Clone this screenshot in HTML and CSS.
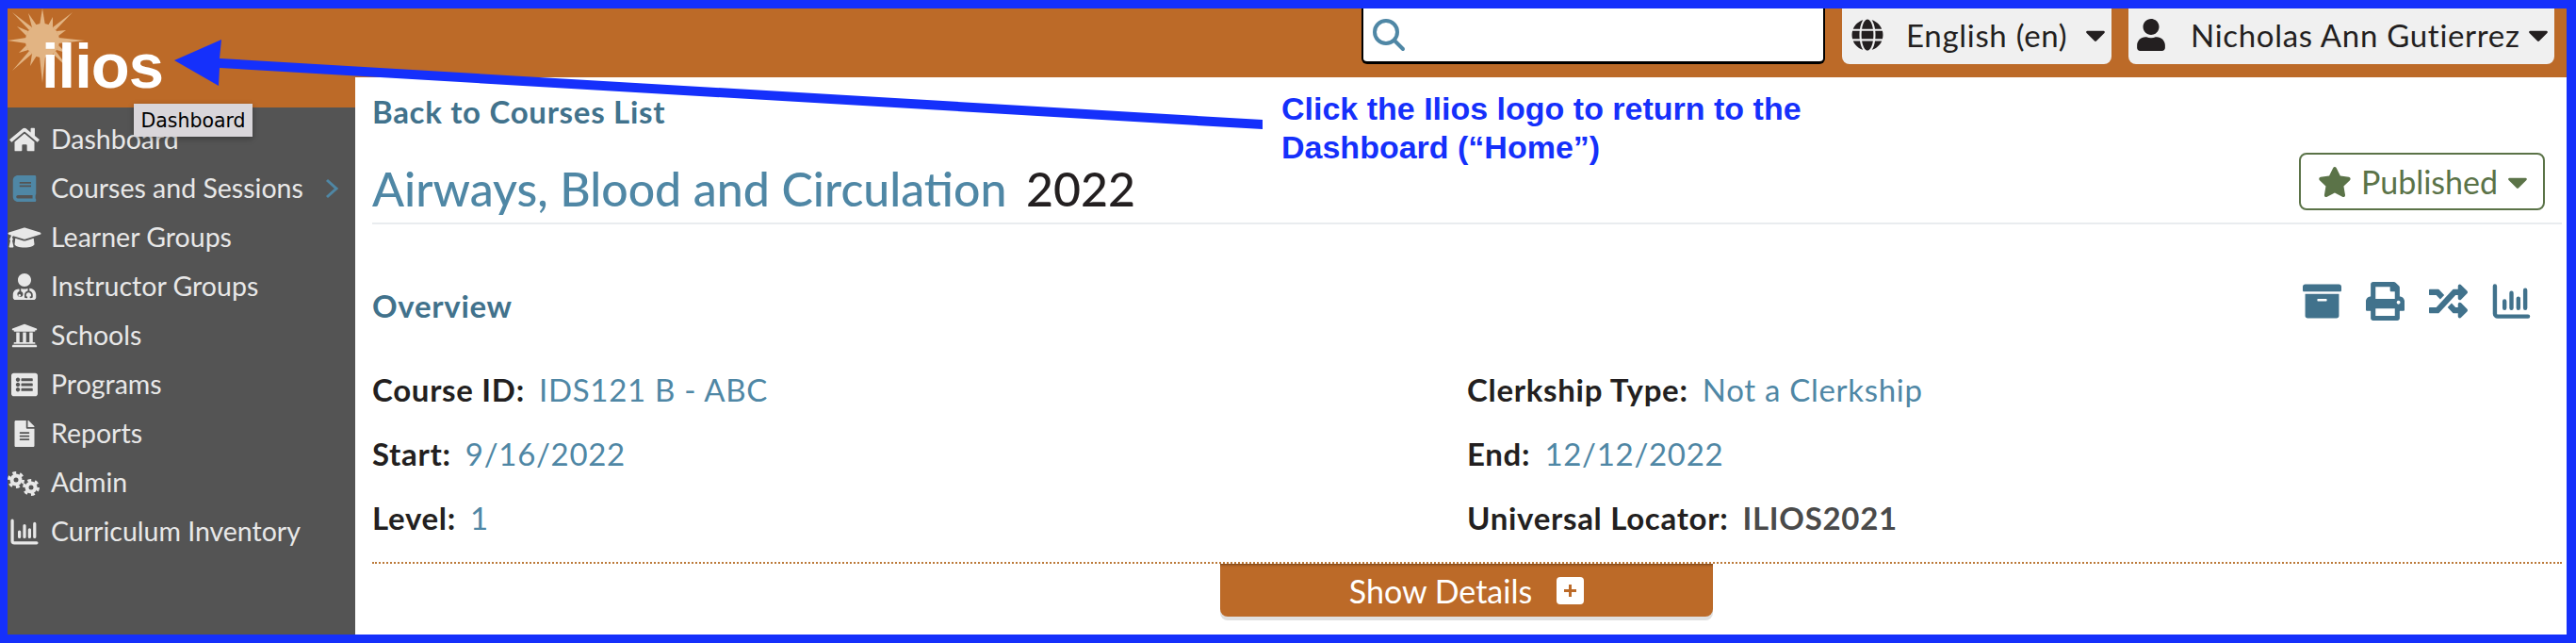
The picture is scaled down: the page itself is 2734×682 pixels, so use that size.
FILE: index.html
```html
<!DOCTYPE html>
<html lang="en">

<head>
  <meta charset="UTF-8">
  <title>Ilios</title>
  <link rel="stylesheet" href="styles.css">
</head>

<body>
  <div class="frame">
    <div class="side">
      <a class="logo" href="#">
        <svg class="logo-star" viewBox="0 0 90 90">
          <circle cx="45" cy="43" r="18" />
          <polygon points="45,9 48,27 42,27" />
          <polygon points="45,88 48,60 42,60" />
          <polygon points="8,43 28,40 28,46" />
          <polygon points="90,43 62,40 62,46" />
          <polygon points="13,13 34,29 31,32" />
          <polygon points="77,13 59,32 56,29" />
          <polygon points="13,75 31,54 34,57" />
          <polygon points="75,75 56,57 59,54" />
          <polygon points="30,14 39,27 34,29" />
          <polygon points="56,18 56,29 51,27" />
          <polygon points="18,28 30,33 28,38" />
          <polygon points="70,32 62,38 60,33" />
          <polygon points="20,56 28,48 30,53" />
          <polygon points="70,56 60,53 62,48" />
          <polygon points="32,70 34,57 39,59" />
          <polygon points="58,70 51,59 56,57" />
        </svg>
        <span class="logo-text">ilios</span>
      </a>
      <span class="tip">Dashboard</span>
      <ul class="nav">
        <li><svg class="nav-icon" viewBox="0 0 576 512"><path d="M280.37 148.26L96 300.11V464a16 16 0 0 0 16 16l112.06-.29a16 16 0 0 0 15.92-16V368a16 16 0 0 1 16-16h64a16 16 0 0 1 16 16v95.64a16 16 0 0 0 16 16.05L464 480a16 16 0 0 0 16-16V300L295.67 148.26a12.19 12.19 0 0 0-15.3 0zM571.6 251.47L488 182.56V44.05a12 12 0 0 0-12-12h-56a12 12 0 0 0-12 12v72.61L318.47 43a48 48 0 0 0-61 0L4.34 251.47a12 12 0 0 0-1.6 16.9l25.5 31A12 12 0 0 0 45.15 301l235.22-193.74a12.19 12.19 0 0 1 15.3 0L530.9 301a12 12 0 0 0 16.9-1.6l25.5-31a12 12 0 0 0-1.7-16.93z"/></svg>Dashboard</li>
        <li class="active"><svg class="nav-icon" viewBox="0 0 448 512"><path d="M448 360V24c0-13.3-10.7-24-24-24H96C43 0 0 43 0 96v320c0 53 43 96 96 96h328c13.3 0 24-10.7 24-24v-16c0-7.5-3.5-14.3-8.9-18.7-4.2-15.4-4.2-59.3 0-74.7 5.4-4.3 8.9-11.1 8.9-18.6zM128 134c0-3.3 2.7-6 6-6h212c3.3 0 6 2.7 6 6v20c0 3.3-2.7 6-6 6H134c-3.3 0-6-2.7-6-6v-20zm0 64c0-3.3 2.7-6 6-6h212c3.3 0 6 2.7 6 6v20c0 3.3-2.7 6-6 6H134c-3.3 0-6-2.7-6-6v-20zm253.4 250H96c-17.7 0-32-14.3-32-32 0-17.6 14.4-32 32-32h285.4c-1.9 17.1-1.9 46.9 0 64z"/></svg>Courses and Sessions<svg class="nav-arrow" viewBox="0 0 16 24"><polyline points="3,3 13,12 3,21" /></svg></li>
        <li><svg class="nav-icon" viewBox="0 0 640 512"><path d="M622.34 153.2L343.4 67.5c-15.2-4.67-31.6-4.67-46.79 0L17.66 153.2c-23.54 7.23-23.54 38.36 0 45.59l48.63 14.94c-10.67 13.19-17.23 29.28-17.88 46.9C38.78 266.15 32 276.11 32 288c0 10.78 5.68 19.85 13.86 25.65L20.33 428.53C18.11 438.52 25.71 448 35.94 448h56.11c10.24 0 17.84-9.48 15.62-19.47L82.14 313.65C90.32 307.85 96 298.78 96 288c0-11.57-6.47-21.25-15.66-26.87.76-15.02 8.44-28.3 20.69-36.72L296.6 284.5c9.06 2.78 26.44 6.25 46.79 0l278.95-85.7c23.55-7.24 23.55-38.36 0-45.6zM352.79 315.09c-28.53 8.76-52.84 3.92-65.59 0l-145.02-44.55L128 384c0 35.35 85.96 64 192 64s192-28.65 192-64l-14.18-113.47-145.03 44.56z"/></svg>Learner Groups</li>
        <li><svg class="nav-icon" viewBox="0 0 448 512"><path d="M224 256c70.7 0 128-57.3 128-128S294.7 0 224 0 96 57.3 96 128s57.3 128 128 128zM104 424c0 13.3 10.7 24 24 24s24-10.7 24-24-10.7-24-24-24-24 10.7-24 24zm216-135.4v49c36.5 7.4 64 39.8 64 78.4v41.7c0 7.6-5.4 14.2-12.9 15.7l-32.2 6.4c-4.3.9-8.5-1.9-9.4-6.3l-3.1-15.7c-.9-4.3 1.9-8.6 6.3-9.4l19.3-3.9V416c0-62.8-96-65.1-96 1.9v26.7l19.3 3.9c4.3.9 7.1 5.1 6.3 9.4l-3.1 15.7c-.9 4.3-5.1 7.1-9.4 6.3l-31.2-4.2c-7.9-1.1-13.8-7.8-13.8-15.9V416c0-38.6 27.5-70.9 64-78.4v-45.2c-2.2-.7-4.4-1.1-6.6-1.9-18 8.3-38.1 13-59.4 13s-41.4-4.7-59.4-13c-2.2.8-4.4 1.2-6.6 1.9v54.2c23.1 6.9 40 28.1 40 53.4 0 30.9-25.1 56-56 56s-56-25.1-56-56c0-25.3 16.9-46.5 40-53.4v-42.8C47.5 298.4 0 351.3 0 416v48c0 26.5 21.5 48 48 48h352c26.5 0 48-21.5 48-48v-48c0-71.3-57.9-124.6-128-127.4z"/></svg>Instructor Groups</li>
        <li><svg class="nav-icon" viewBox="0 0 512 512"><path d="M496 128v16a8 8 0 0 1-8 8h-24v12c0 6.627-5.373 12-12 12H60c-6.627 0-12-5.373-12-12v-12H24a8 8 0 0 1-8-8v-16a8 8 0 0 1 4.941-7.392l232-88a7.996 7.996 0 0 1 6.118 0l232 88A8 8 0 0 1 496 128zm-24 304H40c-13.255 0-24 10.745-24 24v16a8 8 0 0 0 8 8h464a8 8 0 0 0 8-8v-16c0-13.255-10.745-24-24-24zM96 192v192H60c-6.627 0-12 5.373-12 12v20h416v-20c0-6.627-5.373-12-12-12h-36V192h-64v192h-64V192h-64v192h-64V192H96z"/></svg>Schools</li>
        <li><svg class="nav-icon" viewBox="0 0 512 512"><path d="M464 480H48c-26.51 0-48-21.49-48-48V80c0-26.51 21.49-48 48-48h416c26.51 0 48 21.49 48 48v352c0 26.51-21.49 48-48 48zM128 120c-22.091 0-40 17.909-40 40s17.909 40 40 40 40-17.909 40-40-17.909-40-40-40zm0 96c-22.091 0-40 17.909-40 40s17.909 40 40 40 40-17.909 40-40-17.909-40-40-40zm0 96c-22.091 0-40 17.909-40 40s17.909 40 40 40 40-17.909 40-40-17.909-40-40-40zm288-136v-32c0-6.627-5.373-12-12-12H204c-6.627 0-12 5.373-12 12v32c0 6.627 5.373 12 12 12h200c6.627 0 12-5.373 12-12zm0 96v-32c0-6.627-5.373-12-12-12H204c-6.627 0-12 5.373-12 12v32c0 6.627 5.373 12 12 12h200c6.627 0 12-5.373 12-12zm0 96v-32c0-6.627-5.373-12-12-12H204c-6.627 0-12 5.373-12 12v32c0 6.627 5.373 12 12 12h200c6.627 0 12-5.373 12-12z"/></svg>Programs</li>
        <li><svg class="nav-icon" viewBox="0 0 384 512"><path d="M224 136V0H24C10.7 0 0 10.7 0 24v464c0 13.3 10.7 24 24 24h336c13.3 0 24-10.7 24-24V160H248c-13.2 0-24-10.8-24-24zm64 236c0 6.6-5.4 12-12 12H108c-6.6 0-12-5.4-12-12v-8c0-6.6 5.4-12 12-12h168c6.6 0 12 5.4 12 12v8zm0-64c0 6.6-5.4 12-12 12H108c-6.6 0-12-5.4-12-12v-8c0-6.6 5.4-12 12-12h168c6.6 0 12 5.4 12 12v8zm0-72v8c0 6.6-5.4 12-12 12H108c-6.6 0-12-5.4-12-12v-8c0-6.6 5.4-12 12-12h168c6.6 0 12 5.4 12 12zm96-114.1v6.1H256V0h6.1c6.4 0 12.5 2.5 17 7l97.9 98c4.5 4.5 7 10.6 7 16.9z"/></svg>Reports</li>
        <li><svg class="nav-icon" viewBox="0 0 36 28"><circle class="gear" cx="9" cy="11" r="4.500" /><circle class="gear-teeth" cx="9" cy="11" r="7.500" /><circle class="gear" cx="25" cy="19" r="4.500" /><circle class="gear-teeth" cx="25" cy="19" r="7.500" /></svg>Admin</li>
        <li><svg class="nav-icon" viewBox="0 0 28 26"><path class="chart" d="M2 2v20a2 2 0 0 0 2 2h22M9 13v5M14 7v11M19 11v7M24 5v13" /></svg>Curriculum Inventory</li>
      </ul>
    </div>

    <div class="main">
      <div class="topbar">
        <div class="search">
          <svg class="search-icon" viewBox="0 0 36 36"><circle cx="15" cy="15" r="12" /><path d="M24 24l9 9" /></svg>
        </div>
        <div class="menu lang">
          <svg class="menu-icon" viewBox="0 0 496 512"><path d="M336.5 160C322 70.7 287.8 8 248 8s-74 62.7-88.5 152h177zM152 256c0 22.2 1.2 43.5 3.3 64h185.3c2.1-20.5 3.3-41.8 3.3-64s-1.2-43.5-3.3-64H155.3c-2.1 20.5-3.3 41.8-3.3 64zm324.7-96c-28.6-67.9-86.5-120.4-158-141.6 24.4 33.8 41.2 84.7 50 141.6h108zM177.2 18.4C105.8 39.6 47.8 92.1 19.3 160h108c8.7-56.9 25.5-107.8 49.9-141.6zM487.4 192H372.7c2.1 21 3.3 42.5 3.3 64s-1.2 43-3.3 64h114.6c5.5-20.5 8.6-41.8 8.6-64s-3.1-43.5-8.5-64zM120 256c0-21.5 1.2-43 3.3-64H8.6C3.2 212.5 0 233.8 0 256s3.2 43.5 8.6 64h114.6c-2-21-3.2-42.5-3.2-64zm39.5 96c14.5 89.3 48.7 152 88.5 152s74-62.7 88.5-152h-177zm159.3 141.6c71.4-21.2 129.4-73.7 158-141.6h-108c-8.8 56.9-25.6 107.8-50 141.6zM19.3 352c28.6 67.9 86.5 120.4 158 141.6-24.4-33.8-41.2-84.7-50-141.6h-108z"/></svg>
          <span>English (en)</span>
          <svg class="caret" viewBox="0 0 320 512"><path d="M31.3 192h257.3c17.8 0 26.7 21.5 14.1 34.1L174.1 354.8c-7.8 7.8-20.5 7.8-28.3 0L17.2 226.1C4.6 213.5 13.5 192 31.3 192z"/></svg>
        </div>
        <div class="menu user">
          <svg class="menu-icon" viewBox="0 0 448 512"><path d="M224 256c70.7 0 128-57.3 128-128S294.7 0 224 0 96 57.3 96 128s57.3 128 128 128zm89.6 32h-16.7c-22.2 10.2-46.9 16-72.9 16s-50.6-5.8-72.9-16h-16.7C60.2 288 0 348.2 0 422.4V464c0 26.5 21.5 48 48 48h352c26.5 0 48-21.5 48-48v-41.6c0-74.2-60.2-134.4-134.4-134.4z"/></svg>
          <span>Nicholas Ann Gutierrez</span>
          <svg class="caret" viewBox="0 0 320 512"><path d="M31.3 192h257.3c17.8 0 26.7 21.5 14.1 34.1L174.1 354.8c-7.8 7.8-20.5 7.8-28.3 0L17.2 226.1C4.6 213.5 13.5 192 31.3 192z"/></svg>
        </div>
      </div>

      <div class="content">
        <a class="back" href="#">Back to Courses List</a>
        <div class="title-row">
          <h1 class="title"><span class="title-name">Airways, Blood and Circulation</span> <span class="title-year">2022</span></h1>
          <div class="published">
            <svg class="star" viewBox="0 0 576 512"><path d="M259.3 17.8L194 150.2 47.9 171.5c-26.2 3.8-36.7 36.1-17.7 54.6l105.7 103-25 145.5c-4.5 26.3 23.2 46 46.4 33.7L288 439.6l130.7 68.7c23.2 12.2 50.9-7.4 46.4-33.7l-25-145.5 105.7-103c19-18.5 8.5-50.8-17.7-54.6L382 150.2 316.7 17.8c-11.7-23.6-45.6-23.9-57.4 0z"/></svg>
            <span>Published</span>
            <svg class="caret" viewBox="0 0 320 512"><path d="M31.3 192h257.3c17.8 0 26.7 21.5 14.1 34.1L174.1 354.8c-7.8 7.8-20.5 7.8-28.3 0L17.2 226.1C4.6 213.5 13.5 192 31.3 192z"/></svg>
          </div>
        </div>

        <div class="overview-row">
          <h2 class="overview">Overview</h2>
          <div class="tools">
            <svg class="tool" viewBox="0 0 512 512"><path d="M32 448c0 17.7 14.3 32 32 32h384c17.7 0 32-14.3 32-32V160H32v288zm160-212c0-6.6 5.4-12 12-12h104c6.6 0 12 5.4 12 12v8c0 6.6-5.4 12-12 12H204c-6.6 0-12-5.4-12-12v-8zM480 32H32C14.3 32 0 46.3 0 64v48c0 8.8 7.2 16 16 16h480c8.8 0 16-7.2 16-16V64c0-17.7-14.3-32-32-32z"/></svg>
            <svg class="tool" viewBox="0 0 512 512"><path d="M448 192V77.25c0-8.49-3.37-16.62-9.37-22.63L393.37 9.37c-6-6-14.14-9.37-22.63-9.37H96C78.33 0 64 14.33 64 32v160c-35.35 0-64 28.65-64 64v112c0 8.84 7.16 16 16 16h48v96c0 17.67 14.33 32 32 32h320c17.67 0 32-14.33 32-32v-96h48c8.84 0 16-7.16 16-16V256c0-35.35-28.65-64-64-64zm-64 256H128v-96h256v96zm0-224H128V64h192v48c0 8.84 7.16 16 16 16h48v96zm48 72c-13.25 0-24-10.75-24-24 0-13.26 10.75-24 24-24s24 10.74 24 24c0 13.25-10.75 24-24 24z"/></svg>
            <svg class="tool" viewBox="0 0 512 512"><path d="M504.971 359.029c9.373 9.373 9.373 24.569 0 33.941l-80 79.984c-15.01 15.01-40.971 4.49-40.971-16.971V416h-58.785a12.004 12.004 0 0 1-8.773-3.812l-70.556-75.596 53.333-57.143L352 336h32v-39.981c0-21.438 25.943-31.998 40.971-16.971l80 79.981zM12 176h84l52.781 56.551 53.333-57.143-70.556-75.596A11.999 11.999 0 0 0 122.785 96H12c-6.627 0-12 5.373-12 12v56c0 6.627 5.373 12 12 12zm372 0v39.984c0 21.46 25.961 31.98 40.971 16.971l80-79.984c9.373-9.373 9.373-24.569 0-33.941l-80-79.981C409.943 24.021 384 34.582 384 56.019V96h-58.785a12.004 12.004 0 0 0-8.773 3.812L96 336H12c-6.627 0-12 5.373-12 12v56c0 6.627 5.373 12 12 12h110.785c3.326 0 6.503-1.381 8.773-3.812L352 176h32z"/></svg>
            <svg class="tool" viewBox="0 0 28 26"><path class="chart" d="M2 2v20a2 2 0 0 0 2 2h22M9 13v5M14 7v11M19 11v7M24 5v13" /></svg>
          </div>
        </div>

        <div class="fields">
          <div class="field"><b>Course ID:</b> <a href="#">IDS121 B - ABC</a></div>
          <div class="field"><b>Clerkship Type:</b> <a href="#">Not a Clerkship</a></div>
          <div class="field"><b>Start:</b> <a href="#">9/16/2022</a></div>
          <div class="field"><b>End:</b> <a href="#">12/12/2022</a></div>
          <div class="field"><b>Level:</b> <a href="#">1</a></div>
          <div class="field"><b>Universal Locator:</b> <span class="plain">ILIOS2021</span></div>
        </div>

        <div class="details">
          <div class="details-btn">
            Show Details
            <svg class="plus" viewBox="0 0 29 29"><rect width="29" height="29" rx="4" /><path d="M14.500 8v13M8 14.500h13" /></svg>
          </div>
        </div>
      </div>
    </div>
  </div>

  <!-- annotation on top of the screenshot -->
  <svg class="arrow" viewBox="0 0 2734 682">
    <polygon points="185,64 235,42 233,62 1340,127 1340,137 233,72 232,91" />
  </svg>
  <div class="callout">Click the Ilios logo to return to the<br>Dashboard (“Home”)</div>
</body>

</html>
```

FILE: styles.css
```css
* {
  margin: 0;
  padding: 0;
  box-sizing: border-box;
}

html,
body {
  width: 2734px;
  height: 682px;
  overflow: hidden;
  background: #fff;
}

body {
  position: relative;
  font-family: "Lato", "Open Sans", sans-serif;
  color: #231f20;
}

a {
  color: #4f87a5;
  text-decoration: none;
}

.frame {
  display: flex;
  width: 100%;
  height: 100%;
  border: solid #1530fb;
  border-width: 9px 10px 9px 8px;
}

/* left column */
.side {
  position: relative;
  display: flex;
  flex-direction: column;
  flex: 0 0 369px;
  background: #545454;
}

.logo {
  position: relative;
  display: block;
  height: 105px;
  background: #bc6a28;
}

.logo-star {
  position: absolute;
  left: -8px;
  top: -9px;
  width: 90px;
  height: 90px;
  fill: #e2b483;
}

.logo-text {
  position: absolute;
  left: 36px;
  top: 23px;
  font: bold 67px/76px "Liberation Sans", sans-serif;
  letter-spacing: -1px;
  color: #fff;
}

.tip {
  position: absolute;
  left: 134px;
  top: 101px;
  z-index: 2;
  width: 126px;
  height: 35px;
  background: #d9d6da;
  box-shadow: 0 2px 6px rgba(0, 0, 0, .3);
  font: 20.500px/37px "DejaVu Sans", sans-serif;
  text-align: center;
  color: #000;
}

.nav {
  list-style: none;
  padding-top: 7px;
}

.nav li {
  display: flex;
  align-items: center;
  height: 52px;
  font-size: 28.500px;
  color: #e8e8e8;
}

.nav-icon {
  flex: 0 0 auto;
  width: 36px;
  height: 28px;
  margin: 2px 10px 0 0;
  fill: #e8e8e8;
}

.nav .active .nav-icon {
  fill: #4f87a5;
}

.nav-arrow {
  width: 16px;
  height: 24px;
  margin: 2px 0 0 22px;
  fill: none;
  stroke: #4f87a5;
  stroke-width: 3;
}

.gear {
  fill: none;
  stroke: #e8e8e8;
  stroke-width: 4;
}

.gear-teeth {
  fill: none;
  stroke: #e8e8e8;
  stroke-width: 3;
  stroke-dasharray: 3.900 3.950;
}

.chart {
  fill: none;
  stroke: currentColor;
  stroke-width: 3;
  stroke-linecap: round;
}

/* right column */
.main {
  flex: 1;
  display: flex;
  flex-direction: column;
  min-width: 0;
}

.topbar {
  display: flex;
  justify-content: flex-end;
  gap: 18px;
  flex: 0 0 73px;
  padding: 0 13px 14px 0;
  background: #bc6a28;
}

.search {
  display: flex;
  align-items: center;
  width: 492px;
  padding-left: 9px;
  background: #fff;
  border: 2px solid #000;
  border-top: 0;
  border-bottom-width: 3px;
  border-radius: 0 0 6px 6px;
}

.search-icon {
  width: 36px;
  height: 36px;
  fill: none;
  stroke: #4f87a5;
  stroke-width: 4;
  stroke-linecap: round;
}

.menu {
  display: flex;
  align-items: center;
  padding: 0 6px 4px 10px;
  background: #f0f0f0;
  border-radius: 0 0 8px 8px;
  font-size: 33px;
  letter-spacing: .7px;
}

.lang {
  width: 286px;
}

.user {
  width: 452px;
  padding-left: 7px;
}

.menu-icon {
  width: 34px;
  height: 34px;
  margin-right: 24px;
  fill: #231f20;
}

.user .menu-icon {
  margin-right: 25px;
}

.caret {
  width: 22px;
  height: 34px;
  margin-left: auto;
  fill: currentColor;
}

.content {
  flex: 1;
  padding: 18px 5px 0 18px;
}

.back {
  display: block;
  font-size: 33px;
  font-weight: 700;
  line-height: 36px;
  letter-spacing: .7px;
  color: #41728c;
}

.title-row {
  display: flex;
  justify-content: space-between;
  align-items: flex-end;
  height: 75px;
  margin-top: 27px;
  padding-right: 18px;
  border-bottom: 2px solid #e9ecef;
}

.title {
  margin-bottom: 7px;
  font-size: 50px;
  font-weight: 500;
  line-height: 58px;
}

.title-name {
  color: #4f87a5;
}

.title-year {
  margin-left: 8px;
}

.published {
  display: flex;
  align-items: center;
  gap: 10px;
  width: 261px;
  height: 61px;
  margin-bottom: 13px;
  padding: 0 16px 0 18px;
  border: 2px solid #5b7348;
  border-radius: 8px;
  font-size: 34px;
  color: #5b7348;
  fill: #5b7348;
}

.star {
  width: 36px;
  height: 34px;
}

.overview-row {
  display: flex;
  justify-content: space-between;
  align-items: center;
  margin-top: 61px;
  padding-right: 33px;
}

.overview {
  font-size: 33px;
  font-weight: 700;
  letter-spacing: .7px;
  color: #41728c;
}

.tools {
  display: flex;
  gap: 26px;
  margin-bottom: 8px;
  color: #41728c;
  fill: #41728c;
}

.tool {
  width: 41px;
  height: 41px;
}

.fields {
  display: grid;
  grid-template-columns: 1162px 1fr;
  row-gap: 32px;
  margin-top: 47px;
  font-size: 33px;
  line-height: 36px;
  letter-spacing: .7px;
}

.field b {
  margin-right: 6px;
}

.plain {
  font-weight: 700;
  color: #4a4a4a;
}

.details {
  margin-top: 29px;
  border-top: 2px dotted #bc7a3a;
}

.details-btn {
  display: flex;
  align-items: center;
  justify-content: center;
  gap: 26px;
  width: 523px;
  height: 56px;
  margin-left: 900px;
  background: #bc6a28;
  border-radius: 0 0 8px 8px;
  box-shadow: 0 4px 0 #e0e0e0, inset 0 3px 3px -2px rgba(0, 0, 0, .4);
  font-size: 34px;
  color: #fff;
}

.plus {
  width: 29px;
  height: 29px;
  fill: #fff;
}

.plus path {
  fill: none;
  stroke: #bc6a28;
  stroke-width: 3;
}

/* annotation */
.arrow {
  position: absolute;
  left: 0;
  top: 0;
  width: 2734px;
  height: 682px;
  fill: #1530fb;
}

.callout {
  position: absolute;
  left: 1360px;
  top: 95px;
  font: bold 34px/41px "Liberation Sans", sans-serif;
  color: #1530fb;
}
```
